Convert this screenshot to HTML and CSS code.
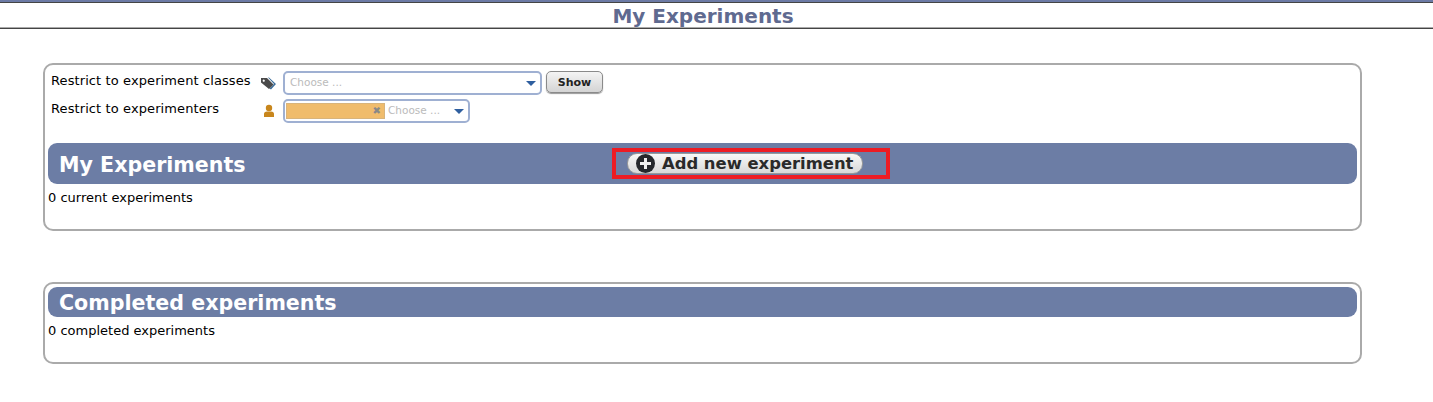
FILE: index.html
```html
<!DOCTYPE html>
<html lang="en">
<head>
    <meta charset="UTF-8">
    <meta name="viewport" content="width=device-width, initial-scale=1.0">
    <title>My Experiments</title>
    <link rel="stylesheet" href="styles.css">
</head>
<body>
    <h1 class="page-title">My Experiments</h1>

    <div class="panel panel-current">
        <div class="filter-row">
            <span class="filter-label">Restrict to experiment classes</span>
            <svg class="filter-icon" width="16" height="14" viewBox="0 0 16 14">
                <path d="M3.5 1.5 H8 L15 8 L10 13.5 L8.5 12.5 L13 8 L7 1.5 Z" fill="#3d6f9c"/>
                <path d="M0 2 H6 L12.5 8.5 L8 13 L0 6.5 Z M2.7 3.6 a1.1 1.1 0 1 0 .1 0 Z" fill="#4a4a4a" fill-rule="evenodd"/>
            </svg>
            <div class="select select-wide">
                <span class="placeholder">Choose ...</span>
                <span class="arrow"></span>
            </div>
            <button type="button" class="show-button">Show</button>
        </div>
        <div class="filter-row filter-row-second">
            <span class="filter-label">Restrict to experimenters</span>
            <svg class="filter-icon" width="16" height="14" viewBox="0 0 16 14">
                <circle cx="8" cy="4" r="3.2" fill="#c8861c"/>
                <path d="M3 13 V10 Q3 7.5 6 7.5 H10 Q13 7.5 13 10 V13 Z" fill="#c8861c"/>
            </svg>
            <div class="select select-narrow">
                <span class="token"><span class="token-x">&#10006;</span></span>
                <span class="placeholder">Choose ...</span>
                <span class="arrow"></span>
            </div>
        </div>

        <div class="section-bar bar-tall">
            <h2>My Experiments</h2>
            <div class="add-highlight">
                <button type="button" class="add-button">
                    <svg width="19" height="19" viewBox="0 0 19 19">
                        <circle cx="9.5" cy="9.5" r="9.5" fill="#26282c"/>
                        <path d="M8 4 H11 V8 H15 V11 H11 V15 H8 V11 H4 V8 H8 Z" fill="#f0f0f0"/>
                    </svg>
                    Add new experiment
                </button>
            </div>
        </div>
        <p class="count">0 current experiments</p>
    </div>

    <div class="panel panel-completed">
        <div class="section-bar">
            <h2>Completed experiments</h2>
        </div>
        <p class="count">0 completed experiments</p>
    </div>
</body>
</html>
```

FILE: styles.css
```css
body {
    font-family: "DejaVu Sans", Verdana, sans-serif;
    font-size: 13px;
    margin: 0;
    padding: 0;
    background-color: #fff;
    color: #000;
}

.page-title {
    margin: 0;
    height: 26px;
    padding-right: 27px;
    border-top: 2px solid #6c7aa5;
    border-bottom: 1px solid #444;
    box-shadow: inset 0 1px 0 #444, inset 0 -1px 0 #aaa;
    text-align: center;
    color: #5f6a90;
    font-size: 20px;
    font-weight: bold;
    line-height: 28px;
}

.panel {
    width: 1309px;
    margin-left: 43px;
    border: 2px solid #aaa;
    border-radius: 10px;
    padding: 3px;
}

.panel-current {
    margin-top: 34px;
    height: 155px;
    padding-top: 6px;
}

.panel-completed {
    margin-top: 51px;
    height: 72px;
}

.filter-row {
    display: flex;
    align-items: flex-start;
    height: 24px;
}

.filter-row-second {
    margin-top: 4px;
}

.filter-label {
    width: 210px;
    padding-left: 3px;
    letter-spacing: 0.1px;
    line-height: 20px;
}

.filter-icon {
    margin-top: 5px;
    margin-right: 6px;
}

.select {
    display: flex;
    align-items: center;
    box-sizing: border-box;
    height: 24px;
    border: 2px solid #9fb0d2;
    border-radius: 5px;
    padding-left: 5px;
    background-color: #fff;
}

.select-wide {
    width: 259px;
}

.select-narrow {
    width: 187px;
    padding-left: 1px;
}

.placeholder {
    flex: 1;
    margin-top: -2px;
    color: #bbb;
    font-size: 10.5px;
}

.arrow {
    width: 0;
    height: 0;
    margin-right: 4px;
    border-left: 5.5px solid transparent;
    border-right: 5.5px solid transparent;
    border-top: 5px solid #2f5f9f;
}

.token {
    display: flex;
    align-items: center;
    justify-content: flex-end;
    box-sizing: border-box;
    width: 99px;
    height: 16px;
    margin-right: 3px;
    margin-top: -1px;
    padding-right: 3px;
    background-color: #f0bc6c;
    border: 1px solid #d8b47c;
}

.token-x {
    color: #888;
    font-size: 10px;
}

.show-button {
    box-sizing: border-box;
    width: 57px;
    height: 22px;
    margin-left: 4px;
    border: 1px solid #8a8a8a;
    border-radius: 5px;
    background: linear-gradient(#f4f4f4, #d4d4d4);
    box-shadow: 0 1px 1px #999;
    font-family: inherit;
    font-size: 11px;
    font-weight: bold;
    color: #222;
    padding: 0;
}

.section-bar {
    display: flex;
    align-items: center;
    height: 30px;
    border-radius: 9px;
    background-color: #6c7da5;
    color: #fff;
}

.bar-tall {
    height: 41px;
    margin-top: 20px;
}

.section-bar h2 {
    margin: 2px 0 0;
    padding-left: 11px;
    font-size: 20.6px;
    font-weight: bold;
}

.bar-tall h2 {
    width: 553px;
}

.add-highlight {
    display: flex;
    align-items: center;
    box-sizing: border-box;
    width: 278px;
    height: 31px;
    margin-top: -1px;
    padding-left: 11px;
    border: 4px solid #ed1c24;
}

.add-button {
    display: flex;
    align-items: center;
    gap: 7px;
    box-sizing: border-box;
    width: 236px;
    height: 21px;
    padding: 0 0 0 8px;
    border: 1px solid #999;
    border-radius: 10px;
    background: linear-gradient(#f8f8f8, #d8d8d8);
    font-family: inherit;
    font-size: 16.4px;
    font-weight: bold;
    color: #2a2a2a;
    white-space: nowrap;
}

.count {
    margin: 6px 0 0;
    line-height: 16px;
}
```
